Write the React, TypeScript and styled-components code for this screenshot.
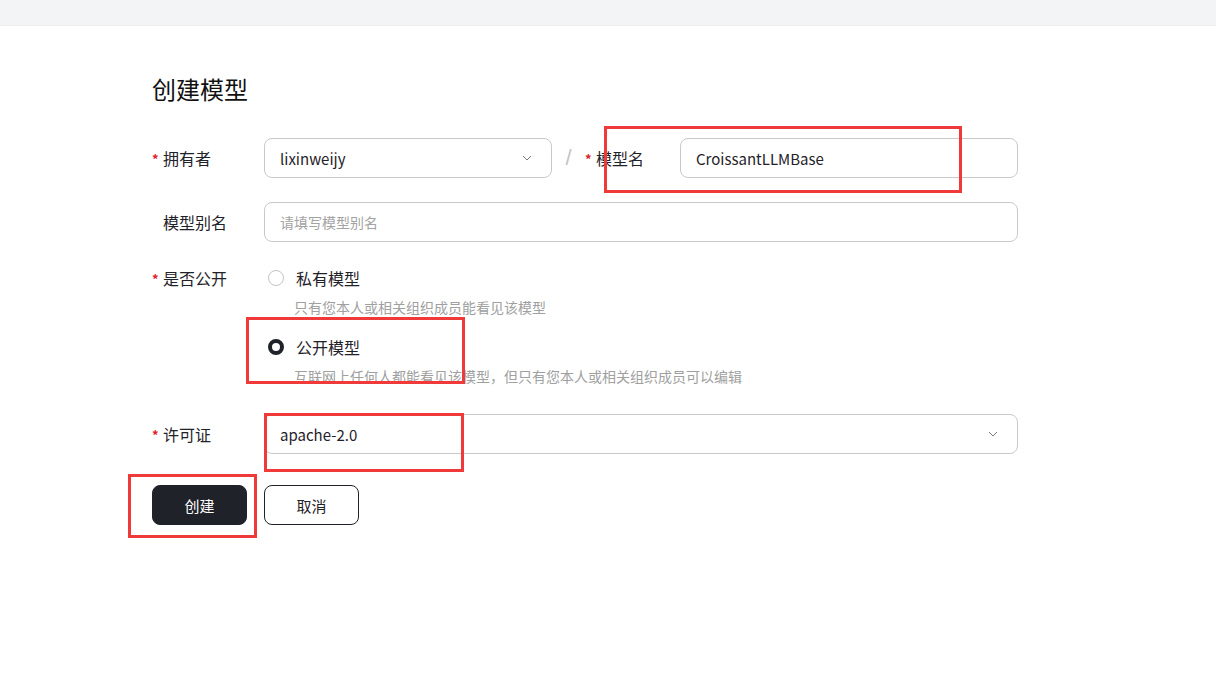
import React from 'react';
import styled, { createGlobalStyle } from 'styled-components';

const GlobalStyle = createGlobalStyle`
  html, body {
    margin: 0;
    padding: 0;
    background: #fff;
    font-family: "Noto Sans CJK SC", "Liberation Sans", sans-serif;
    color: #1f2229;
  }
`;

const TopBar = styled.div`
  height: 25px;
  background: #f3f4f6;
  border-bottom: 1px solid #eceef2;
`;

const Page = styled.div`
  position: relative;
  padding: 47px 0 0 152px;
  width: 866px;
`;

const Title = styled.h1`
  margin: 0 0 33px;
  font-size: 24px;
  line-height: 32px;
  font-weight: 400;
  color: #111;
`;

const Row = styled.div<{ $mb?: number }>`
  display: flex;
  align-items: flex-start;
  margin-bottom: ${(p) => p.$mb ?? 24}px;
`;

const Label = styled.div<{ $w?: number; $h?: number }>`
  width: ${(p) => p.$w ?? 112}px;
  height: ${(p) => p.$h ?? 40}px;
  flex-shrink: 0;
  display: flex;
  align-items: center;
  font-size: 16px;
  color: #1f2229;
  padding-left: 11px;
  box-sizing: border-box;
  position: relative;
`;

const Star = styled.span`
  position: absolute;
  left: 0;
  color: #e0202a;
  font-size: 13px;
  font-weight: 700;
  line-height: 1;
  margin-top: 1px;
`;

const Field = styled.div<{ $w?: number }>`
  width: ${(p) => (p.$w ? `${p.$w}px` : 'auto')};
  flex: ${(p) => (p.$w ? '0 0 auto' : '1')};
  height: 40px;
  box-sizing: border-box;
  border: 1px solid #c9c9c9;
  border-radius: 8px;
  display: flex;
  align-items: center;
  justify-content: space-between;
  padding: 0 19px 0 15px;
  font-size: 15px;
  color: #1f2229;
  background: #fff;
`;

const Placeholder = styled.span`
  font-size: 14px;
  color: #a3a3a3;
`;

const Slash = styled.span`
  width: 33px;
  height: 40px;
  display: flex;
  align-items: center;
  justify-content: center;
  font-size: 22px;
  color: #c4c4c4;
  font-family: "Liberation Sans", sans-serif;
`;

const Options = styled.div`
  display: flex;
  flex-direction: column;
`;

const Option = styled.label`
  display: flex;
  align-items: center;
  height: 24px;
  font-size: 16px;
  padding-left: 4px;
  gap: 12px;
`;

const Radio = styled.span<{ $on?: boolean }>`
  width: 16px;
  height: 16px;
  box-sizing: border-box;
  border-radius: 50%;
  border: ${(p) => (p.$on ? '4px solid #1f2229' : '1px solid #c4c4c4')};
  background: #fff;
`;

const Hint = styled.div<{ $mb?: number }>`
  font-size: 14px;
  line-height: 20px;
  color: #a0a0a0;
  padding-left: 30px;
  margin-top: 7px;
  margin-bottom: ${(p) => p.$mb ?? 0}px;
`;

const Buttons = styled.div`
  display: flex;
  gap: 17px;
`;

const Button = styled.button<{ $primary?: boolean }>`
  width: 95px;
  height: 40px;
  border-radius: 8px;
  font: inherit;
  font-size: 15px;
  cursor: pointer;
  background: ${(p) => (p.$primary ? '#1f2229' : '#fff')};
  color: ${(p) => (p.$primary ? '#fff' : '#1f2229')};
  border: 1px solid #1f2229;
`;

const Mark = styled.div`
  position: absolute;
  border: 3px solid #f03a3a;
  box-sizing: border-box;
  pointer-events: none;
`;

const Chevron = () => (
  <svg width="10" height="6" viewBox="0 0 10 6" fill="none">
    <path d="M1 1l4 4 4-4" stroke="#777" strokeWidth="1" />
  </svg>
);

export default function App() {
  return (
    <>
      <GlobalStyle />
      <TopBar />
      <Page>
        <Title>创建模型</Title>

        <Row>
          <Label>
            <Star>*</Star>拥有者
          </Label>
          <Field $w={288}>
            lixinweijy
            <Chevron />
          </Field>
          <Slash>/</Slash>
          <Label $w={95}>
            <Star>*</Star>模型名
          </Label>
          <Field>CroissantLLMBase</Field>
        </Row>

        <Row $mb={24}>
          <Label>模型别名</Label>
          <Field>
            <Placeholder>请填写模型别名</Placeholder>
          </Field>
        </Row>

        <Row $mb={0}>
          <Label $h={24}>
            <Star>*</Star>是否公开
          </Label>
          <Options>
            <Option>
              <Radio />
              私有模型
            </Option>
            <Hint $mb={18}>只有您本人或相关组织成员能看见该模型</Hint>
            <Option>
              <Radio $on />
              公开模型
            </Option>
            <Hint $mb={28}>互联网上任何人都能看见该模型，但只有您本人或相关组织成员可以编辑</Hint>
          </Options>
        </Row>

        <Row $mb={31}>
          <Label>
            <Star>*</Star>许可证
          </Label>
          <Field>
            apache-2.0
            <Chevron />
          </Field>
        </Row>

        <Buttons>
          <Button $primary>创建</Button>
          <Button>取消</Button>
        </Buttons>
      </Page>

      <Mark style={{ left: 604, top: 126, width: 358, height: 67 }} />
      <Mark style={{ left: 246, top: 317, width: 219, height: 67 }} />
      <Mark style={{ left: 264, top: 413, width: 200, height: 59 }} />
      <Mark style={{ left: 128, top: 474, width: 129, height: 64 }} />
    </>
  );
}
